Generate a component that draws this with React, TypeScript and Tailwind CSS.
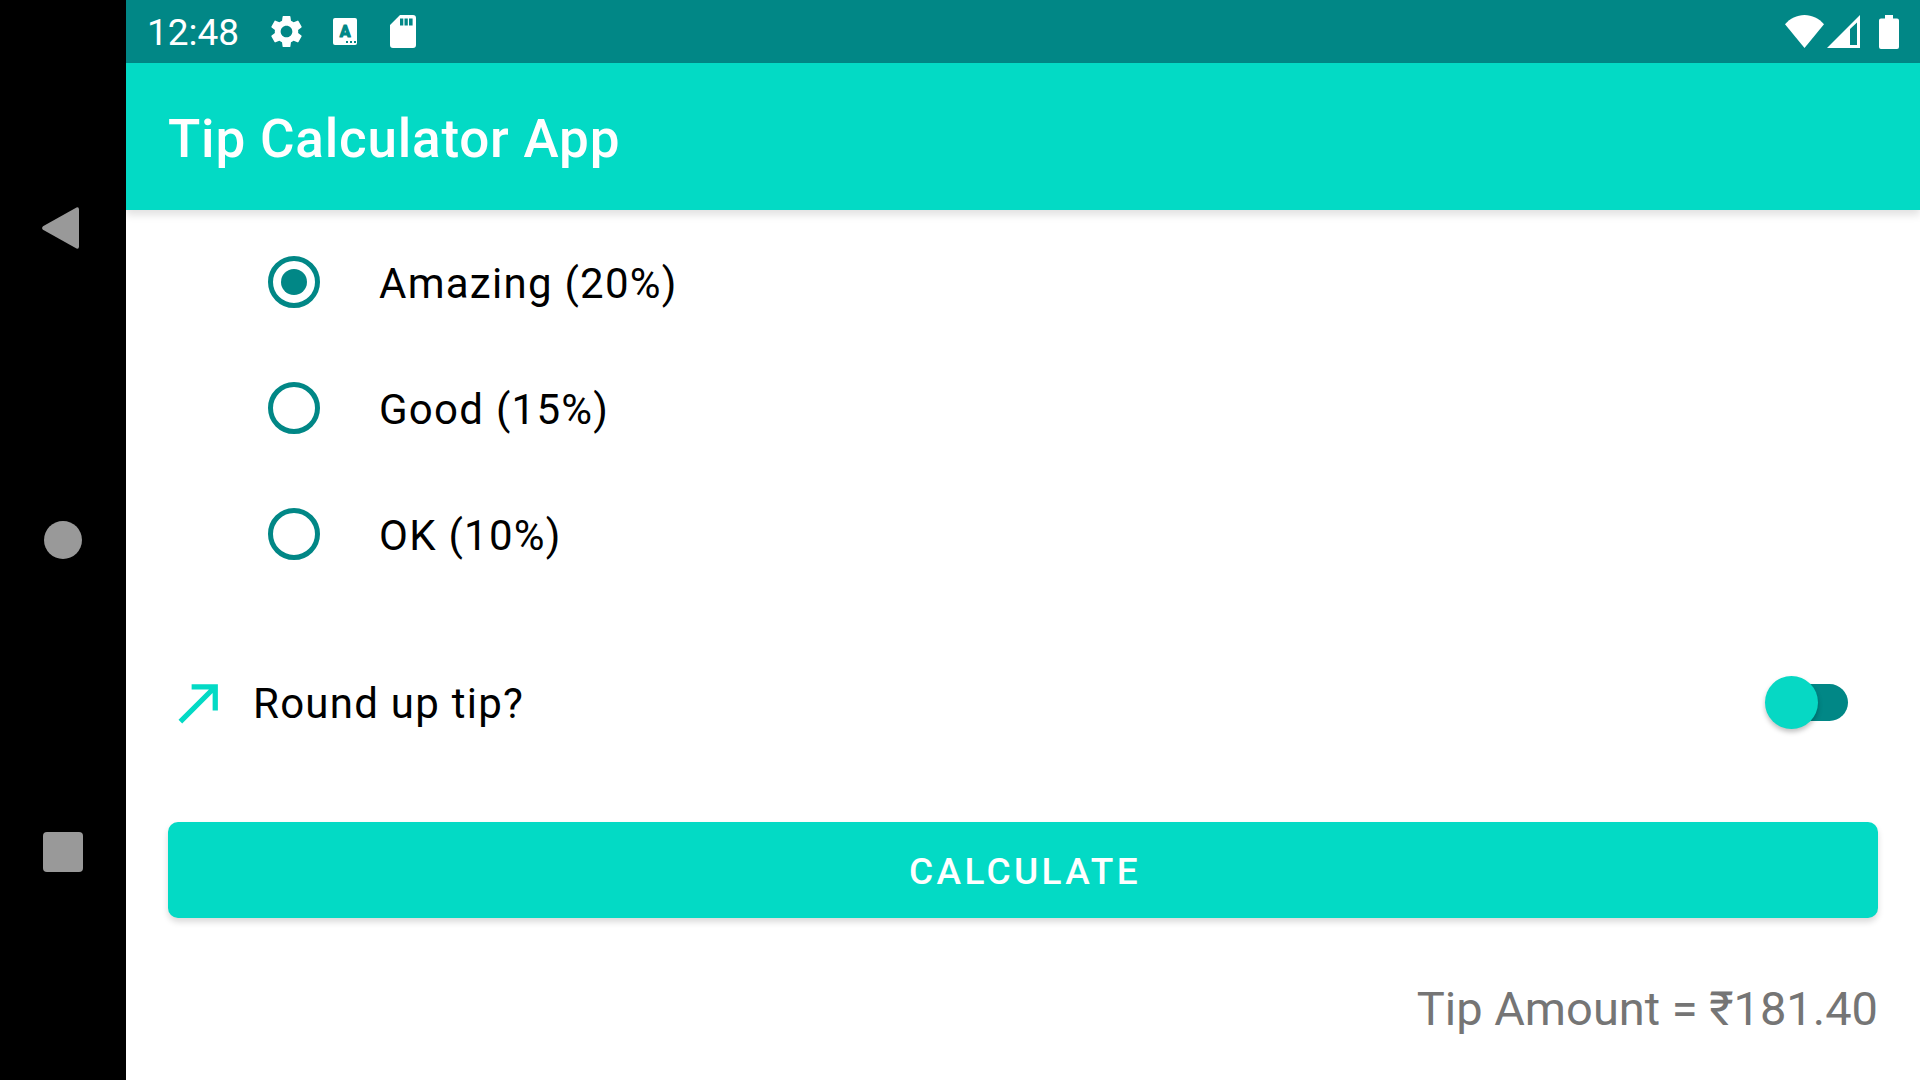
import { useState } from "react";
import { MdSettings } from "react-icons/md";

const options = [
  { id: "amazing", label: "Amazing (20%)" },
  { id: "good", label: "Good (15%)" },
  { id: "ok", label: "OK (10%)" },
];

function LanguageIcon() {
  return (
    <svg width="24" height="27" viewBox="0 0 24 27" aria-hidden="true">
      <rect width="24" height="27" rx="2" fill="#fff" />
      <text
        x="12"
        y="19"
        textAnchor="middle"
        fontFamily="Roboto, sans-serif"
        fontSize="16"
        fontWeight="700"
        fill="#018786"
        stroke="#018786"
        strokeWidth="1.2"
        strokeLinejoin="round"
      >
        A
      </text>
      <path d="M13 23h2v2h-2zM17 23h2v2h-2zM21 23h2v2h-2z" fill="#018786" />
    </svg>
  );
}

function SdCardIcon() {
  return (
    <svg width="26" height="33" viewBox="0 0 26 33" aria-hidden="true">
      <path
        fillRule="evenodd"
        fill="#fff"
        d="M10 0h13a3 3 0 0 1 3 3v27a3 3 0 0 1-3 3H3a3 3 0 0 1-3-3V10zM10 3.4v7h3.3v-7zM14.5 3.4v7h3.3v-7zM19 3.4v7h3.6v-7z"
      />
    </svg>
  );
}

function StatusBar() {
  return (
    <div className="flex h-[63px] items-center justify-between bg-[#018786] pr-[21px] pl-[21px] text-white">
      <div className="flex items-center">
        <span className="pt-[2px] text-[37px] leading-[44px]">12:48</span>
        <MdSettings className="ml-[28px] size-[39px]" aria-hidden="true" />
        <div className="ml-[27px]">
          <LanguageIcon />
        </div>
        <div className="ml-[33px]">
          <SdCardIcon />
        </div>
      </div>
      <div className="flex items-center">
        <svg width="39" height="33" viewBox="0 0 39 33" fill="#fff" aria-hidden="true">
          <path d="M19.5 33 0 9.200C5 3.500 12 0 19.500 0S34 3.500 39 9.200z" />
        </svg>
        <svg className="ml-[3px]" width="33" height="33" viewBox="0 0 33 33" fill="#fff" aria-hidden="true">
          <path fillRule="evenodd" d="M33 0v33H0zM23 14v16H30V7.500z" />
        </svg>
        <svg className="ml-[19px]" width="20" height="34" viewBox="0 0 20 34" fill="#fff" aria-hidden="true">
          <path d="M6 0h8v3.500h4a2 2 0 0 1 2 2V32a2 2 0 0 1-2 2H2a2 2 0 0 1-2-2V5.500a2 2 0 0 1 2-2h4z" />
        </svg>
      </div>
    </div>
  );
}

function NavigationBar() {
  return (
    <nav className="flex w-[126px] shrink-0 flex-col bg-black py-[72px] text-[#999999]">
      <button type="button" aria-label="Back" className="flex flex-1 items-center justify-center">
        <svg width="42" height="42" viewBox="0 0 42 42" fill="currentColor" aria-hidden="true">
          <path d="M1 19.200 34.500.4Q37 -.3 37 2.500V39.500Q37 42.300 34.500 41.600L1 22.800Q-.8 21 1 19.200z" />
        </svg>
      </button>
      <button type="button" aria-label="Home" className="flex flex-1 items-center justify-center">
        <span className="size-[38px] rounded-full bg-current" />
      </button>
      <button type="button" aria-label="Overview" className="flex flex-1 items-center justify-center">
        <span className="size-[40px] rounded-[4px] bg-current" />
      </button>
    </nav>
  );
}

export default function App() {
  const [selected, setSelected] = useState("amazing");
  const [roundUp, setRoundUp] = useState(false);

  return (
    <div className="flex min-h-screen bg-white font-['Roboto',sans-serif] text-black">
      <NavigationBar />
      <div className="flex min-w-0 flex-1 flex-col">
        <StatusBar />
        <header className="flex h-[147px] items-center bg-[#03DAC5] px-[42px] pt-[4px] shadow-[0_5px_8px_rgba(0,0,0,0.12)]">
          <h1 className="text-[53px] leading-[62px] font-medium tracking-[0.015em] text-white">
            Tip Calculator App
          </h1>
        </header>
        <main className="flex flex-col px-[42px] pt-[9px]">
          <div role="radiogroup" aria-label="Tip percentage" className="flex flex-col items-start pl-[100px]">
            {options.map(({ id, label }) => (
              <label key={id} className="flex h-[126px] items-center gap-[59px] text-[42px] leading-[50px] tracking-[0.03em]">
                <input
                  type="radio"
                  name="tip"
                  checked={selected === id}
                  onChange={() => setSelected(id)}
                  className="grid size-[52px] appearance-none place-items-center rounded-full border-[5px] border-[#018786] before:size-[26px] before:rounded-full checked:before:bg-[#018786]"
                />
                <span className="pt-[4px]">{label}</span>
              </label>
            ))}
          </div>
          <label className="mt-[42px] flex h-[126px] items-center pr-[30px] text-[42px] leading-[50px] tracking-[0.03em]">
            <svg width="63" height="63" viewBox="0 0 24 24" fill="#03DAC5" aria-hidden="true">
              <path d="M9 5v2h6.590L4 18.590 5.410 20 17 8.410V15h2V5z" />
            </svg>
            <span className="ml-[22px] flex-1 pt-[4px]">Round up tip?</span>
            <input
              type="checkbox"
              role="switch"
              checked={roundUp}
              onChange={() => setRoundUp(!roundUp)}
              className="flex h-[37px] w-[78px] appearance-none items-center rounded-full bg-[#018786] before:-ml-[5px] before:size-[53px] before:shrink-0 before:rounded-full before:bg-[#06D8C4] before:shadow-[0_3px_5px_rgba(0,0,0,0.25)] checked:before:ml-[30px]"
            />
          </label>
          <button
            type="button"
            className="mt-[57px] h-[96px] rounded-[10px] bg-[#03DAC5] pt-[4px] pl-[4px] text-[37px] leading-[44px] font-medium tracking-[0.09em] text-white shadow-[0_4px_6px_rgba(0,0,0,0.15)]"
          >
            CALCULATE
          </button>
          <p className="mt-[63px] text-right text-[47px] leading-[56px] text-[#757575]">Tip Amount = ₹181.40</p>
        </main>
      </div>
    </div>
  );
}
